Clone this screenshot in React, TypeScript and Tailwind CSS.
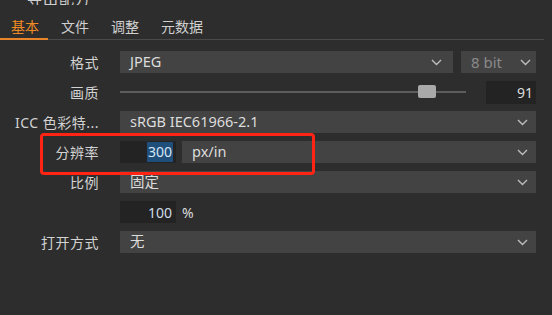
import React from 'react';

const font = { fontFamily: '"Noto Sans", "Noto Sans CJK SC", sans-serif' };

function Chevron({ className = '' }: { className?: string }) {
  return (
    <svg width="11" height="7" viewBox="0 0 11 7" className={className}>
      <path d="M1 1 L5.5 5.5 L10 1" fill="none" stroke="#bdbdbd" strokeWidth="1.4" />
    </svg>
  );
}

function Select({ value, className = '', dim = false, chevronRight = 'pr-[8px]' }: { value: string; className?: string; dim?: boolean; chevronRight?: string }) {
  return (
    <div className={`h-[22px] bg-[#434343] flex items-center justify-between pl-[10px] ${chevronRight} ${className}`}>
      <span className={dim ? 'text-[#8a8a8a] text-[15px]' : 'text-[#dcdcdc] text-[14.5px]'}>{value}</span>
      <Chevron />
    </div>
  );
}

function Row({ label, children }: { label: string; children: React.ReactNode }) {
  return (
    <div className="flex items-center h-[22px]">
      <div className="w-[120px] pr-[21px] text-right text-[14px] tracking-[0.5px] text-[#d2d2d2] whitespace-nowrap">{label}</div>
      <div className="flex-1 flex items-center pr-[16px]">{children}</div>
    </div>
  );
}

export default function App() {
  return (
    <div className="w-[552px] h-[315px] bg-[#2d2d2d] overflow-hidden relative flex" style={font}>
      <div className="flex-1 flex flex-col">
        {/* title, cut off at the top */}
        <div className="h-[5px] overflow-hidden relative">
          <div className="absolute left-[27px] top-[-13px] text-[15px] text-[#cfcfcf] tracking-[1px]">导出配方</div>
        </div>

        {/* tabs */}
        <div className="flex items-end mt-[9px] border-b border-[#4a4a4a] mr-[8px] h-[26px]">
          <div className="w-[48px] h-full flex items-center justify-center text-[14px] text-[#f08a24] border-b-2 border-[#e8852a] -mb-[1px] pl-[2px]">基本</div>
          <div className="h-full flex items-center text-[14px] text-[#d0d0d0] ml-[13px]">文件</div>
          <div className="h-full flex items-center text-[14px] text-[#d0d0d0] ml-[22px]">调整</div>
          <div className="h-full flex items-center text-[14px] text-[#d0d0d0] ml-[22px]">元数据</div>
        </div>

        {/* form */}
        <div className="flex flex-col gap-[8px] mt-[11px]">
          <Row label="格式">
            <Select value="JPEG" className="w-[333px]" chevronRight="pr-[11px]" />
            <Select value="8 bit" dim className="w-[75px] ml-[8px]" chevronRight="pr-[5px]" />
          </Row>
          <Row label="画质">
            <div className="w-[346px] relative h-[22px] flex items-center">
              <div className="w-full h-[2px] bg-[#5c5c5c]" />
              <div className="absolute left-[298px] top-[4px] w-[18px] h-[13px] rounded-[2px] bg-[#a9a9a9]" />
            </div>
            <div className="w-[50px] ml-[20px] h-[23px] bg-[#232323] flex items-center justify-end pr-[3px] text-[14px] text-[#dcdcdc]">91</div>
          </Row>
          <Row label="ICC 色彩特...">
            <Select value="sRGB IEC61966-2.1" className="flex-1" />
          </Row>
          <div className="relative">
            <Row label="分辨率">
              <div className="w-[56px] h-[22px] bg-[#232323] flex items-center justify-end pr-[3px]">
                <span className="bg-[#1f4e7a] text-[14px] text-[#d6e6f6] leading-[20px] px-[1px]">300</span>
              </div>
              <Select value="px/in" className="flex-1 ml-[6px]" />
            </Row>
            <div className="absolute left-[40px] top-[-8px] w-[275px] h-[42px] border-[3px] border-[#ff2414] rounded-[4px]" />
          </div>
          <Row label="比例">
            <Select value="固定" className="flex-1" />
          </Row>
          <Row label="">
            <div className="w-[56px] h-[22px] bg-[#232323] flex items-center justify-end pr-[4px] text-[14px] text-[#cfdcea]">100</div>
            <span className="ml-[6px] text-[14px] text-[#dcdcdc]">%</span>
          </Row>
          <Row label="打开方式">
            <Select value="无" className="flex-1" />
          </Row>
        </div>
      </div>
      {/* right edge scrollbar strip */}
      <div className="w-[1px] bg-[#1c1c1c]" />
      <div className="w-[2px] bg-[#3a3a3a]" />
    </div>
  );
}
